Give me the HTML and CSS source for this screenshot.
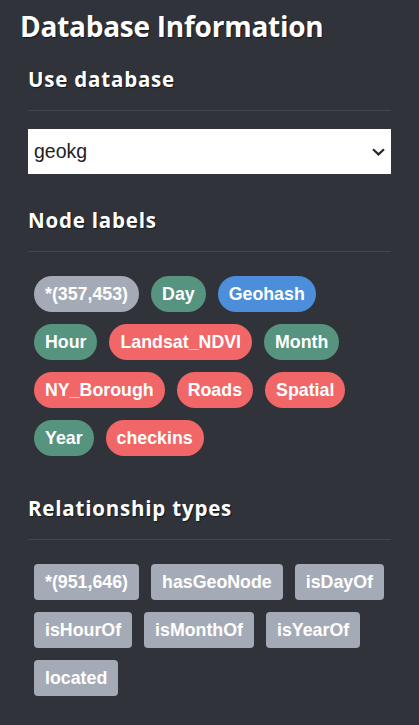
FILE: index.html
```html
<!DOCTYPE html>
<html lang="en">
<head>
<meta charset="utf-8">
<title>Database Information</title>
<link rel="stylesheet" href="styles.css">
</head>
<body>
<div class="drawer">
  <h2 class="drawer-title">Database Information</h2>

  <section class="section">
    <h3 class="section-title">Use database</h3>
    <div class="select">
      <span class="select-value">geokg</span>
      <svg class="chevron" width="13" height="8" viewBox="0 0 13 8"><path d="M1 1.2 L6.5 6.4 L12 1.2" fill="none" stroke="#2a2a2a" stroke-width="2.2"/></svg>
    </div>
  </section>

  <section class="section">
    <h3 class="section-title">Node labels</h3>
    <div class="tags">
      <span class="pill grey">*(357,453)</span>
      <span class="pill green">Day</span>
      <span class="pill blue">Geohash</span>
      <span class="pill green">Hour</span>
      <span class="pill red">Landsat_NDVI</span>
      <span class="pill green">Month</span>
      <span class="pill red">NY_Borough</span>
      <span class="pill red">Roads</span>
      <span class="pill red">Spatial</span>
      <span class="pill green">Year</span>
      <span class="pill red">checkins</span>
    </div>
  </section>

  <section class="section">
    <h3 class="section-title">Relationship types</h3>
    <div class="tags">
      <span class="pill rel">*(951,646)</span>
      <span class="pill rel">hasGeoNode</span>
      <span class="pill rel">isDayOf</span>
      <span class="pill rel">isHourOf</span>
      <span class="pill rel">isMonthOf</span>
      <span class="pill rel">isYearOf</span>
      <span class="pill rel">located</span>
    </div>
  </section>
</div>
</body>
</html>
```

FILE: styles.css
```css
html, body {
  margin: 0;
  padding: 0;
  background: #31333b;
}

body {
  width: 419px;
  min-height: 725px;
  font-family: "Open Sans", "Liberation Sans", sans-serif;
  color: #ffffff;
}

.drawer {
  padding: 9px 20px 20px 20px;
}

.drawer-title {
  margin: 0;
  font-size: 28px;
  line-height: 34px;
  font-weight: 700;
  letter-spacing: -0.25px;
  text-shadow: 1px 1px 1px rgba(0, 0, 0, 0.55);
}

.section {
  padding: 0 8px;
  margin-top: 22px;
}

.section + .section {
  margin-top: 32px;
}

.section-title {
  margin: 0 0 18px 0;
  font-size: 20.5px;
  line-height: 28px;
  font-weight: 700;
  letter-spacing: 0.8px;
  padding-bottom: 17px;
  border-bottom: 1px solid #43464e;
  text-shadow: 1px 1px 1px rgba(0, 0, 0, 0.55);
}

.select {
  height: 45px;
  background: #ffffff;
  display: flex;
  align-items: center;
  justify-content: space-between;
  padding: 0 6px 0 6px;
  box-sizing: border-box;
}

.select-value {
  font-family: "Liberation Sans", Arial, sans-serif;
  font-size: 19.5px;
  color: #222222;
}

.chevron {
  display: block;
  margin-top: 1px;
}

.tags {
  display: flex;
  flex-wrap: wrap;
}

.pill {
  margin: 6px;
  height: 36px;
  line-height: 36px;
  padding: 0 11px;
  border-radius: 18px;
  font-family: "Liberation Sans", Arial, sans-serif;
  font-weight: 700;
  font-size: 17.8px;
  color: #ffffff;
  white-space: nowrap;
}

.grey { background: #a5abb6; }
.green { background: #569480; }
.blue { background: #4c8eda; }
.red { background: #f16667; }

.rel {
  background: #a5abb6;
  border-radius: 4px;
}
```
